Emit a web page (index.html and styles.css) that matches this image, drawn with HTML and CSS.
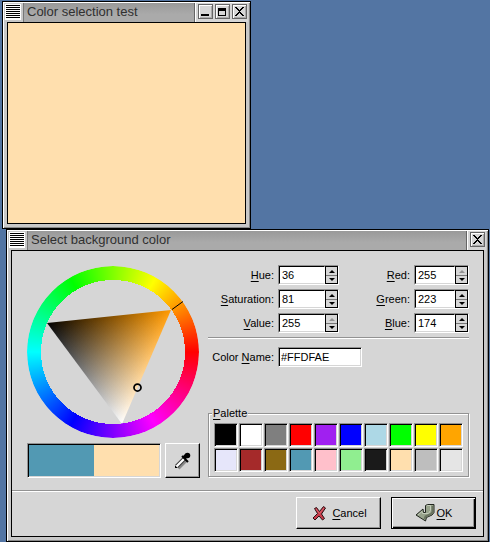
FILE: index.html
```html
<!DOCTYPE html>
<html lang="en">
<head>
<meta charset="utf-8">
<title>Color selection test</title>
<link rel="stylesheet" href="styles.css">
</head>
<body>
<section class="window window-test" aria-label="Color selection test">
  <header class="titlebar">
    <span class="grip"></span>
    <h1 class="title">Color selection test</h1>
    <div class="controls">
      <button class="control" type="button" aria-label="Minimize"><svg width="9" height="9" viewBox="0 0 9 9" shape-rendering="crispEdges"><path d="M0 7h8v2H0z"/></svg></button>
      <button class="control" type="button" aria-label="Maximize"><svg width="9" height="9" viewBox="0 0 9 9" shape-rendering="crispEdges"><path fill-rule="evenodd" d="M0 1h8v8H0zM1 4v4h6V4z"/></svg></button>
      <button class="control" type="button" aria-label="Close"><svg width="9" height="9" viewBox="0 0 9 9" shape-rendering="crispEdges"><path d="M0 0h2v1h1v1h1v1h1V2h1V1h1V0h2v1H8v1H7v1H6v1H5v1h1v1h1v1h1v1h1v1H7V8H6V7H5V6H4v1H3v1H2v1H0V8h1V7h1V6h1V5h1V4H3V3H2V2H1V1H0z"/></svg></button>
    </div>
  </header>
  <div class="preview"></div>
</section>

<section class="window window-dialog" aria-label="Select background color">
  <header class="titlebar">
    <span class="grip"></span>
    <h2 class="title">Select background color</h2>
    <div class="controls">
      <button class="control" type="button" aria-label="Close"><svg width="9" height="9" viewBox="0 0 9 9" shape-rendering="crispEdges"><path d="M0 0h2v1h1v1h1v1h1V2h1V1h1V0h2v1H8v1H7v1H6v1H5v1h1v1h1v1h1v1h1v1H7V8H6V7H5V6H4v1H3v1H2v1H0V8h1V7h1V6h1V5h1V4H3V3H2V2H1V1H0z"/></svg></button>
    </div>
  </header>
  <form class="dialog">
    <div class="selector">
      <div class="picker">
        <div class="wheel">
          <div class="ring"></div>
          <svg class="triangle" viewBox="0 0 172 172" aria-hidden="true">
            <defs>
              <clipPath id="tri"><path d="M144 44 20 57l75 101z"/></clipPath>
              <linearGradient id="hue" gradientUnits="userSpaceOnUse" x1="58" y1="108" x2="144" y2="44"><stop offset="0" stop-color="#000"/><stop offset="1" stop-color="#ff9900"/></linearGradient>
              <linearGradient id="white" gradientUnits="userSpaceOnUse" x1="84" y1="50" x2="95" y2="158"><stop offset="0" stop-color="#000"/><stop offset="1" stop-color="#fff"/></linearGradient>
            </defs>
            <g clip-path="url(#tri)" class="blend">
              <path d="M0 0h172v172H0z" fill="url(#hue)"/>
              <path class="add" d="M0 0h172v172H0z" fill="url(#white)"/>
            </g>
            <path d="M145 43.500l11-8" stroke="#000"/>
            <circle cx="110.500" cy="121.500" r="3.500" fill="none" stroke="#000" stroke-width="1.750"/>
          </svg>
        </div>
        <div class="compare">
          <div class="samples well"><span class="previous"></span><span class="current"></span></div>
          <button class="button dropper" type="button" aria-label="Pick a color from the screen">
            <svg width="18" height="18" viewBox="0 0 18 18">
              <path d="M4 16L12 8" stroke="#8a8a8a" stroke-width="4"/>
              <path d="M2.500 14.500l8-8" stroke="#333" stroke-width="4"/>
              <path d="M2.500 14.500l8-8" stroke="#fff" stroke-width="2.250"/>
              <path d="M1 14h1v1h1v1H1z"/>
              <path d="M8 4l6 6" stroke="#000" stroke-width="2"/>
              <path d="M10 6l3-3" stroke="#000" stroke-width="4"/>
              <circle cx="13.500" cy="3.500" r="2.750"/>
            </svg>
          </button>
        </div>
      </div>

      <div class="details">
        <div class="fields">
          <label for="hue-value"><u>H</u>ue:</label>
          <div class="spin"><input id="hue-value" type="text" value="36"><span class="steps"><button type="button" aria-label="Increase hue"></button><button type="button" aria-label="Decrease hue"></button></span></div>
          <label for="red"><u>R</u>ed:</label>
          <div class="spin"><input id="red" type="text" value="255"><span class="steps"><button type="button" disabled aria-label="Increase red"></button><button type="button" aria-label="Decrease red"></button></span></div>
          <label for="saturation"><u>S</u>aturation:</label>
          <div class="spin"><input id="saturation" type="text" value="81"><span class="steps"><button type="button" aria-label="Increase saturation"></button><button type="button" aria-label="Decrease saturation"></button></span></div>
          <label for="green"><u>G</u>reen:</label>
          <div class="spin"><input id="green" type="text" value="223"><span class="steps"><button type="button" aria-label="Increase green"></button><button type="button" aria-label="Decrease green"></button></span></div>
          <label for="value"><u>V</u>alue:</label>
          <div class="spin"><input id="value" type="text" value="255"><span class="steps"><button type="button" disabled aria-label="Increase value"></button><button type="button" aria-label="Decrease value"></button></span></div>
          <label for="blue"><u>B</u>lue:</label>
          <div class="spin"><input id="blue" type="text" value="174"><span class="steps"><button type="button" aria-label="Increase blue"></button><button type="button" aria-label="Decrease blue"></button></span></div>
        </div>
        <hr class="rule">
        <div class="name-row">
          <label for="color-name">Color <u>N</u>ame:</label>
          <input id="color-name" class="well name-input" type="text" value="#FFDFAE">
        </div>
        <fieldset class="palette">
          <legend><u>P</u>alette</legend>
          <div class="swatches">
            <button type="button" class="well black" aria-label="Black"></button>
            <button type="button" class="well white" aria-label="White"></button>
            <button type="button" class="well gray" aria-label="Gray"></button>
            <button type="button" class="well red" aria-label="Red"></button>
            <button type="button" class="well purple" aria-label="Purple"></button>
            <button type="button" class="well blue" aria-label="Blue"></button>
            <button type="button" class="well light-blue" aria-label="Light blue"></button>
            <button type="button" class="well green" aria-label="Green"></button>
            <button type="button" class="well yellow" aria-label="Yellow"></button>
            <button type="button" class="well orange" aria-label="Orange"></button>
            <button type="button" class="well lavender" aria-label="Lavender"></button>
            <button type="button" class="well brown" aria-label="Brown"></button>
            <button type="button" class="well goldenrod" aria-label="Dark goldenrod"></button>
            <button type="button" class="well teal" aria-label="Teal"></button>
            <button type="button" class="well pink" aria-label="Pink"></button>
            <button type="button" class="well light-green" aria-label="Light green"></button>
            <button type="button" class="well charcoal" aria-label="Charcoal"></button>
            <button type="button" class="well peach" aria-label="Peach"></button>
            <button type="button" class="well silver" aria-label="Silver"></button>
            <button type="button" class="well pale-gray" aria-label="Pale gray"></button>
          </div>
        </fieldset>
      </div>
    </div>
    <hr class="rule">
    <div class="actions">
      <button class="button action" type="button">
        <svg width="20" height="20" viewBox="0 0 20 20" aria-hidden="true"><path d="M4.500 5.500l2-1 3 4 4-5 2 1.500-4 6 3 4.500-2 1.500-3.500-4-4 4-2-2 4.500-4.500z" fill="#c63b49" stroke="#2a1114" stroke-width="1" stroke-linejoin="round"/><path d="M6 6l3.500 4.500L14 5" fill="none" stroke="#df6470"/></svg>
        <span><u>C</u>ancel</span>
      </button>
      <button class="button action default" type="button">
        <svg width="20" height="20" viewBox="0 0 20 20" aria-hidden="true"><path d="M10.500 2.500l2-1h6.500v8l-2 2.500-5.500 2.500-1 3.500-9.500-6 7-6 .500 3.500h2z" fill="#97a28b" stroke="#20251e" stroke-linejoin="round"/><path d="M11.500 3l1-.500h3v5l-2 3H7.500l-.500-2-4 3.500" fill="none" stroke="#c3ccb9"/><path d="M17.500 3v6l-1.500 2-5.500 2.500-1 2.500" fill="none" stroke="#69735f" stroke-width="2"/></svg>
        <span><u>O</u>K</span>
      </button>
    </div>
  </form>
</section>
</body>
</html>
```
FILE: styles.css
```css
* { box-sizing: border-box; }

body {
  margin: 0;
  padding: 1px 1px 0 2px;
  background: #5375a3;
  color: #000;
  font: 11px/16px "Liberation Sans", Arial, sans-serif;
}

button, input { font: inherit; color: inherit; margin: 0; padding: 0; border-radius: 0; }
u { text-underline-offset: 2px; text-decoration-thickness: 1px; }

/* Window frames */
.window {
  border: 1px solid #000;
  padding: 0 4px 4px;
  background: #c8c8c8;
  box-shadow: inset 1px 1px #fff, inset -1px -1px #888;
}
.window-test { max-width: 249px; }
.window-dialog { margin-left: 4px; }

.titlebar {
  display: flex;
  height: 20px;
  margin-right: -2px;
  padding-top: 1px;
}
.grip {
  width: 16px;
  margin: 1px 0 2px -2px;
  border: 1px solid #fff;
  background: repeating-linear-gradient(#000 0 1px, #fff 1px 2px);
}
.title {
  flex: 1;
  margin: 0 0 0 2px;
  padding-left: 3px;
  border-left: 1px solid #777;
  border-right: 1px solid #666;
  background: linear-gradient(#999, #aaa 60%, #aaa);
  color: #303030;
  font: 13px/18px "Liberation Sans", Arial, sans-serif;
}
.controls {
  display: flex;
  gap: 2px;
  padding: 1px 1px 1px 2px;
  background: #d6d6d6;
  border-left: 1px solid #fff;
}
.control {
  display: grid;
  place-items: center;
  width: 15px;
  height: 15px;
  border: 1px solid #666;
  background: #d6d6d6;
  box-shadow: inset 1px 1px #fff, inset -1px -1px #aaa;
}

.preview {
  height: 202px;
  border: 1px solid #000;
  background: #ffdfae;
}

/* Dialog */
.dialog {
  border: 1px solid #000;
  background: #d6d6d6;
}
.selector {
  display: flex;
  justify-content: space-between;
  gap: 8px;
  padding: 14px 14px 12px 15px;
}
.rule {
  width: 100%;
  margin: 0;
  height: 2px;
  border: 0;
  border-top: 1px solid #929292;
  border-bottom: 1px solid #fff;
}

.picker { width: 173px; padding-top: 1px; }
.wheel { display: grid; width: 172px; height: 172px; }
.wheel > * { grid-area: 1 / 1; }
.ring {
  border-radius: 50%;
  background: conic-gradient(from 90deg, #f00, #f0f, #00f, #0ff, #0f0, #ff0, #f00);
  -webkit-mask: radial-gradient(circle, transparent 72px, #000 72px);
  mask: radial-gradient(circle, transparent 72px, #000 72px);
}
.triangle { z-index: 1; }
.blend { isolation: isolate; }
.add { mix-blend-mode: plus-lighter; }

.well {
  border: 1px solid;
  border-color: #929292 #fff #fff #929292;
  box-shadow: inset 1px 1px #000, inset -1px -1px #d6d6d6;
}
.compare { display: flex; gap: 4px; margin-top: 5px; }
.samples { display: flex; flex: 1; height: 35px; padding: 1px; }
.samples span { flex: 1; }
.previous { background: #5299b3; }
.current { background: #ffdfae; }

.button {
  border: 1px solid;
  border-color: #fff #000 #000 #fff;
  background: #d6d6d6;
  box-shadow: inset -1px -1px #929292;
}
.dropper { display: grid; place-items: center; width: 35px; height: 35px; }

.details { flex: 1; max-width: 261px; display: flex; flex-direction: column; }
.fields {
  display: grid;
  grid-template-columns: 66px 61px 1fr 55px;
  gap: 4px;
  margin-bottom: 4px;
}
.fields label, .name-row label {
  text-align: right;
  line-height: 20px;
  white-space: nowrap;
}

.spin {
  display: flex;
  height: 20px;
  border: 1px solid;
  border-color: #929292 #fff #fff #929292;
  background: #fff;
}
.spin input {
  flex: 1;
  min-width: 0;
  padding-left: 2px;
  border: 1px solid;
  border-color: #000 #fff #d6d6d6 #000;
  background: #fff;
}
.steps {
  display: grid;
  grid-template-rows: 9px 8px;
  width: 13px;
  border: 1px solid #000;
  border-bottom: 0;
}
.steps button {
  display: grid;
  place-items: center;
  border: 0;
  border-bottom: 1px solid #777;
  background: #d6d6d6;
  color: #000;
}
.steps button + button { border-color: #000; }
.steps button::before {
  content: "";
  border: 3px solid transparent;
  border-top: 0;
  border-bottom: 3px solid currentColor;
}
.steps button + button::before {
  border-bottom: 0;
  border-top: 3px solid currentColor;
}
.steps button:disabled { color: #929292; }

.name-row {
  display: grid;
  grid-template-columns: 66px 84px;
  gap: 4px;
  margin-top: 8px;
}
.name-input { min-width: 0; height: 20px; padding-left: 2px; background: #fff; }

.palette {
  margin: auto 0 1px;
  min-width: 0;
  padding: 2px 5px 4px;
  border: 1px solid #929292;
  box-shadow: 1px 1px #fff, inset 1px 1px #fff;
}
.palette legend { height: 16px; margin-left: -2px; padding: 0 1px; background: #d6d6d6; }
.swatches {
  display: grid;
  grid-template-columns: repeat(10, 1fr);
  grid-auto-rows: 24px;
  gap: 1px;
}
.black { background: #000; }
.white { background: #fff; }
.gray { background: #7f7f7f; }
.red { background: #f00; }
.purple { background: #a020f0; }
.blue { background: #00f; }
.light-blue { background: #add8e6; }
.green { background: #0f0; }
.yellow { background: #ff0; }
.orange { background: #ffa500; }
.lavender { background: #e6e6fa; }
.brown { background: #a52a2a; }
.goldenrod { background: #8b6914; }
.teal { background: #5299b3; }
.pink { background: #ffc0cb; }
.light-green { background: #90ee90; }
.charcoal { background: #1a1a1a; }
.peach { background: #ffdfae; }
.silver { background: #bebebe; }
.pale-gray { background: #e5e5e5; }

.actions {
  display: flex;
  justify-content: flex-end;
  gap: 10px;
  padding: 5px 7px 7px;
}
.action {
  display: flex;
  align-items: center;
  justify-content: center;
  gap: 2px;
  width: 85px;
  height: 32px;
}
.default {
  border-color: #000;
  box-shadow: inset 1px 1px #fff, inset -1px -1px #000, inset -2px -2px #929292;
}
```
